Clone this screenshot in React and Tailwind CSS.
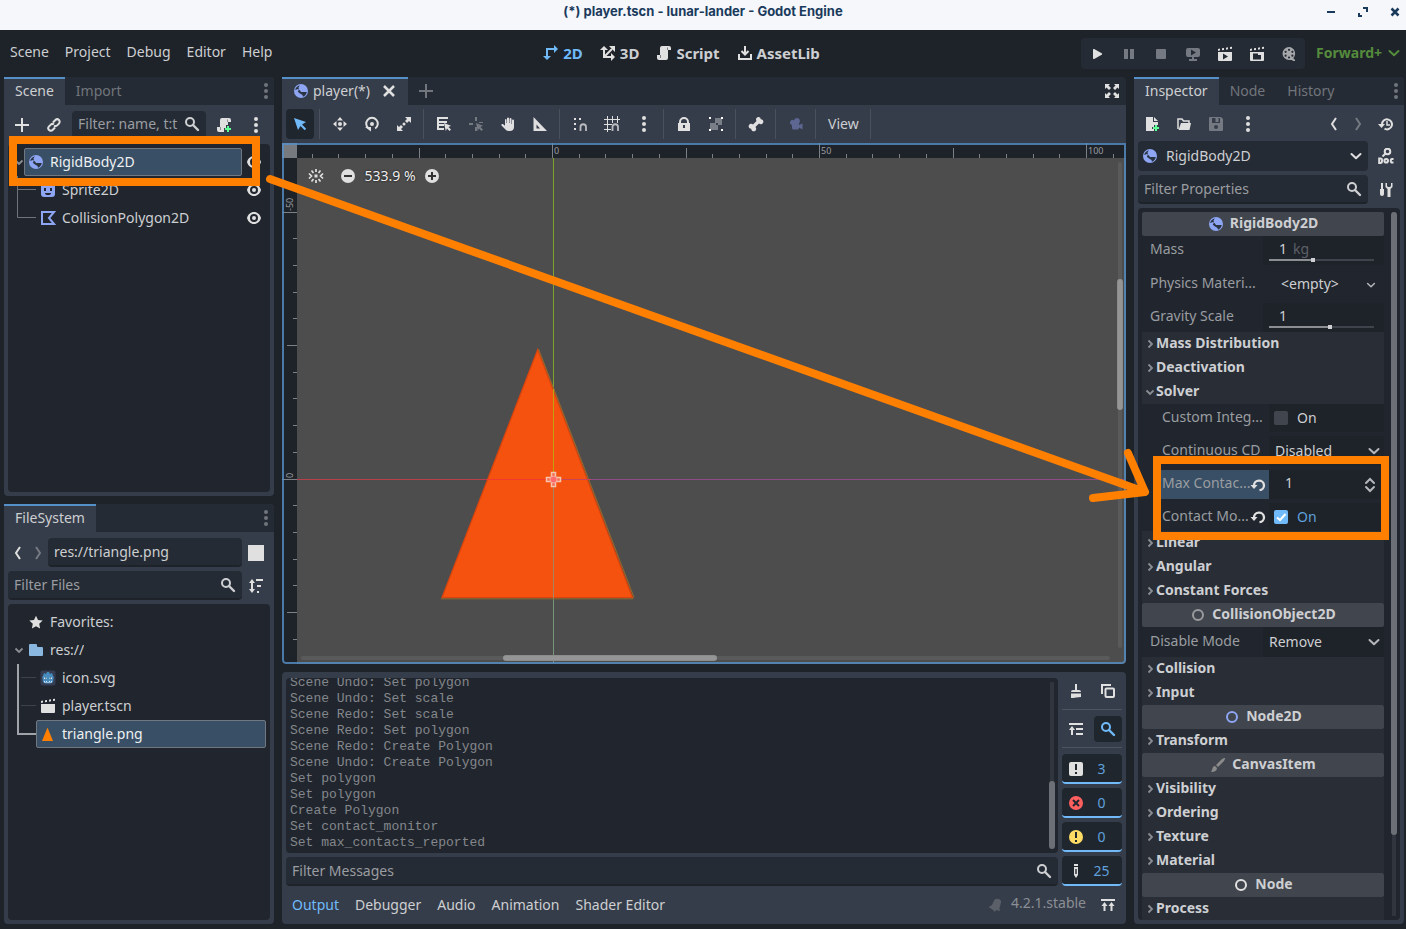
import React from "react";

function Icon({ children, className = "text-[#e0e0e0]" }) {
  return (
    <svg viewBox="0 0 16 16" width="16" height="16" fill="currentColor" aria-hidden="true" className={`shrink-0 ${className}`}>
      {children}
    </svg>
  );
}

const stroke = { fill: "none", stroke: "currentColor", strokeWidth: 2 };

const Plus = (p) => <Icon {...p}><path d="M7 1v6H1v2h6v6h2V9h6V7H9V1z" /></Icon>;
const Link = (p) => (
  <Icon {...p}>
    <g transform="rotate(-45 8 8)" {...stroke}>
      <path d="M7 10.5H3.5a2.5 2.5 0 0 1 0-5H6a2.5 2.5 0 0 1 2.4 2" />
      <path d="M9 5.500h3.500a2.500 2.500 0 0 1 0 5H10a2.500 2.500 0 0 1-2.400-2" />
    </g>
  </Icon>
);
const Search = (p) => (
  <Icon {...p}>
    <circle cx="6" cy="6" r="4" {...stroke} />
    <path d="M9 9l5 5" {...stroke} strokeWidth="2.400" strokeLinecap="round" />
  </Icon>
);
const Dots = (p) => (
  <Icon {...p}><circle cx="8" cy="2" r="2" /><circle cx="8" cy="8" r="2" /><circle cx="8" cy="14" r="2" /></Icon>
);
const scriptPath = "M6 1a2 2 0 0 0-2 2v7H1v3a2 2 0 0 0 2 2h7a2 2 0 0 0 2-2V5h3V3a2 2 0 0 0-2-2z";
const Script = (p) => (
  <Icon {...p}>
    <path d={scriptPath} />
    <path d="M11 2v3h1V3zM4 10v3h1v-3z" fill="#1d2229" opacity=".5" />
  </Icon>
);
const ScriptCreate = (p) => (
  <Icon {...p}>
    <path d="M6 1a2 2 0 0 0-2 2v7H1v3a2 2 0 0 0 2 2h5v-4h2V8h2V5h3V3a2 2 0 0 0-2-2z" />
    <path d="M11 2v3h1V3zM4 10v3h1v-3z" fill="#363d4a" opacity=".5" />
    <path d="M11 9v2H9v2h2v2h2v-2h2v-2h-2V9z" fill="#5fff97" />
  </Icon>
);
const Rigid = (p) => (
  <Icon {...p}>
    <circle cx="8" cy="8" r="7" fill="#8da5f3" />
    <path d="M6.800 2.200C4.500 2.800 2.600 4.600 2.200 7L5 6l2 1.500L8 9h5.800c-.4 2.300-1.800 4-3.800 4.700L9.500 12 7 10.500 4.800 8.800 6 6.500l-.5-2z" fill="#2b3442" />
  </Icon>
);
const Sprite = (p) => (
  <Icon {...p}>
    <rect x="1" y="1" width="14" height="14" rx="3" fill="#8da5f3" />
    <path d="M4 6h2v3H4zM10 6h2v3h-2zM5 11h6a3 2 0 0 1-6 0z" fill="#21262e" />
  </Icon>
);
const Polygon = (p) => <Icon {...p}><path d="M2 2h12L9 8l5 6H2z" {...stroke} stroke="#8da5f3" /></Icon>;
const Eye = (p) => (
  <Icon {...p}>
    <path d="M8 2C4.500 2 2 4.500 1 8c1 3.500 3.500 6 7 6s6-2.500 7-6c-1-3.500-3.500-6-7-6zm0 2a4 4 0 1 1 0 8 4 4 0 0 1 0-8z" />
    <circle cx="8" cy="8" r="2" />
  </Icon>
);
const Back = (p) => <Icon {...p}><path d="M10 2 6 8l4 6" {...stroke} /></Icon>;
const Forward = (p) => <Icon {...p}><path d="M6 2l4 6-4 6" {...stroke} /></Icon>;
const Sort = (p) => (
  <Icon {...p}>
    <path d="M4 1 1 5h2v6H1l3 4 3-4H5V5h2zM8 1h7v2H8zM9 7h4v2H9zM9 13h2v2H9z" />
  </Icon>
);
const Star = (p) => <Icon {...p}><path d="m8 1.700 2 4.300 4.700.6-3.500 3.200.9 4.700L8 12.200l-4.100 2.300.9-4.700L1.300 6.600 6 6z" /></Icon>;
const Folder = (p) => <Icon {...p}><path d="M2 2a1 1 0 0 0-1 1v10a1 1 0 0 0 1 1h12a1 1 0 0 0 1-1V6a1 1 0 0 0-1-1h-4a1 1 0 0 1-1-1V3a1 1 0 0 0-1-1z" fill="#89b7e0" /></Icon>;
const Godot = (p) => (
  <Icon {...p}>
    <rect x=".5" y=".5" width="15" height="15" rx="2" fill="#363d52" />
    <path d="M3 6l1-3 2 1 1-2h2l1 2 2-1 1 3 .8 1L13 12c-2 2-8 2-10 0L2.200 7z" fill="#478cbf" />
    <path d="M4 7.500h2.500v1.500H4zM9.500 7.500H12v1.500H9.500zM4 11h1v1h1v-1h1v1h2v-1h1v1h1v-1h1v1.500H4z" fill="#d8e6f2" />
    <path d="M5 7.500h1v1H5zM10 7.500h1v1h-1z" fill="#414042" />
  </Icon>
);
const clapTop = "M1 3l2-.4v2L1 5zM5 2.300l2-.4v2l-2 .4zM9 1.700l2-.4v2l-2 .4zM13 1l2-.3v2l-2 .4z";
const Clap = (p) => <Icon {...p}><path d={clapTop} /><path d="M1 6h14v8a1 1 0 0 1-1 1H2a1 1 0 0 1-1-1z" /></Icon>;
const PlayScene = (p) => (
  <Icon {...p}><path d={clapTop} /><path fillRule="evenodd" d="M1 6h14v8a1 1 0 0 1-1 1H2a1 1 0 0 1-1-1zM6 7.500v6l5-3z" /></Icon>
);
const PlayCustom = (p) => (
  <Icon {...p}><path d={clapTop} /><path fillRule="evenodd" d="M1 6h14v8a1 1 0 0 1-1 1H2a1 1 0 0 1-1-1zM4 7.500v6h8V9H9V7.500z" /></Icon>
);
const TriangleFile = (p) => <Icon {...p}><path d="M7.500 1.500 13 15H2z" fill="#ff8000" /></Icon>;
const Chevron = (p) => <Icon {...p}><path d="M3.500 6 8 10.300 12.500 6" {...stroke} strokeLinecap="round" strokeLinejoin="round" /></Icon>;
const Close = (p) => <Icon {...p}><path d="M3 3l10 10M13 3 3 13" {...stroke} strokeWidth="2.500" /></Icon>;
const Expand = (p) => (
  <Icon {...p}>
    <path d="M1 1h5L4.500 2.500 7 5 5 7 2.500 4.500 1 6zM15 1v5l-1.500-1.500L11 7 9 5l2.500-2.500L10 1zM1 15v-5l1.500 1.500L5 9l2 2-2.500 2.500L6 15zM15 15h-5l1.500-1.500L9 11l2-2 2.500 2.500L15 10z" />
  </Icon>
);
const Workspace2D = (p) => (
  <Icon {...p}><path d="M4 13V4h8" {...stroke} /><path d="M11 0l4 4-4 4zM0 11h8l-4 4z" /></Icon>
);
const Workspace3D = (p) => (
  <Icon {...p}><path d="M4 4v8h8M4 12l8-8" {...stroke} /><path d="M0 5l4-4 4 4zM11 8l4 4-4 4zM9 1h6v6z" /></Icon>
);
const AssetLib = (p) => (
  <Icon {...p}><path d="M2 9v5h12V9" {...stroke} /><path d="M8 1v8M4.500 6 8 9.500 11.500 6" {...stroke} /></Icon>
);
const Play = (p) => <Icon {...p}><path d="M4 3.800v8.400a.8.800 0 0 0 1.200.7l7.500-4.200a.8.800 0 0 0 0-1.400L5.200 3.100A.8.800 0 0 0 4 3.800z" /></Icon>;
const Pause = (p) => <Icon {...p}><path d="M3 3h4v10H3zM9 3h4v10H9z" /></Icon>;
const Stop = (p) => <Icon {...p}><rect x="3" y="3" width="10" height="10" rx="1" /></Icon>;
const Remote = (p) => (
  <Icon {...p}><path fillRule="evenodd" d="M3 2a2 2 0 0 0-2 2v5a2 2 0 0 0 2 2h10a2 2 0 0 0 2-2V4a2 2 0 0 0-2-2zM6 3.500v6l5-3zM7 11h2v2h3v2H4v-2h3z" /></Icon>
);
const Movie = (p) => (
  <Icon {...p}>
    <path fillRule="evenodd" d="M8 1a6.500 6.500 0 1 0 0 13h3l1 1h2v-1.500c-1 0-1.500-1-1.500-1.800A6.500 6.500 0 0 0 8 1zM8 2.700a1.100 1.100 0 1 1 0 2.200 1.100 1.100 0 0 1 0-2.200zM4.600 4.700a1.100 1.100 0 1 1 0 2.200 1.100 1.100 0 0 1 0-2.200zM11.400 4.700a1.100 1.100 0 1 1 0 2.200 1.100 1.100 0 0 1 0-2.200zM4.600 8.600a1.100 1.100 0 1 1 0 2.200 1.100 1.100 0 0 1 0-2.200zM11.400 8.600a1.100 1.100 0 1 1 0 2.200 1.100 1.100 0 0 1 0-2.200zM8 10.400a1.100 1.100 0 1 1 0 2.200 1.100 1.100 0 0 1 0-2.200z" />
  </Icon>
);
const Select = (p) => <Icon {...p}><path d="M2 2l4 12 2.500-4 4.200 4.200 1.500-1.500L10 8.500 14 6z" /></Icon>;
const Move = (p) => (
  <Icon {...p}><circle cx="8" cy="8" r="2" /><path d="M8 1l3 3.500H5zM8 15l3-3.500H5zM1 8l3.500-3v6zM15 8l-3.500-3v6z" /></Icon>
);
const Rotate = (p) => (
  <Icon {...p}><path d="M4.800 12.500A5.800 5.800 0 1 1 11.200 12.500" {...stroke} /><path d="M1 11h6v4.500z" /><circle cx="8" cy="8" r="2" /></Icon>
);
const Scale = (p) => (
  <Icon {...p}><path d="M9 1h6v6l-2-2-2 2-2-2 2-2zM7 15H1V9l2 2 2-2 2 2-2 2z" /><circle cx="8" cy="8" r="1.500" /></Icon>
);
const ListSelect = (p) => (
  <Icon {...p}><path d="M1 1h11v2H3v2h8v2H3v1h5v2H3v2h5v2H1z" /><path d="M8 7l7 2.800-2.500 1.200L15 13.500 13.500 15 11 12.500 9.800 15z" /></Icon>
);
const Pivot = (p) => (
  <Icon {...p}><path d="M7 1h2v4H7zM7 11h2v4H7zM1 7h4v2H1zM11 6h4v1h-4z" /><path d="M8 7l7 2.800-2.500 1.200L15 13.500 13.500 15 11 12.500 9.800 15z" /></Icon>
);
const Pan = (p) => (
  <Icon {...p}><path d="M7 2.500a1 1 0 0 1 2 0V7h.5V3a1 1 0 0 1 2 0v5h.5V4.500a1 1 0 0 1 2 0V11c0 2.500-1.500 4-4 4H8.500c-1.500 0-2.500-.7-3.500-2L1.500 9.500C1 8.500 2.300 7.600 3.200 8.300L5 9.800V3.500a1 1 0 0 1 1.500 0V7H7z" /></Icon>
);
const Ruler = (p) => <Icon {...p}><path fillRule="evenodd" d="M1.500 1v14H15zM4.500 8.500l3.500 4H4.500z" /></Icon>;
const Magnet = <path d="M8.500 15v-4a2.500 2.500 0 0 1 5.500 0v4" {...stroke} strokeWidth="1.800" stroke="#b9bbbe" />;
const SmartSnap = (p) => <Icon {...p}><path d="M1 2h2v2H1zM6 2h2v2H6zM1 7h2v2H1zM1 12h2v2H1z" transform="translate(1)" />{Magnet}</Icon>;
const GridSnap = (p) => <Icon {...p}><path d="M3 0h1v3h4V0h1v3h4V0h1v3h2v1h-2v3h-1V4H9v3H8V4H4v4h4v1H4v4h3v1H4v2H3v-2H0v-1h3V9H0V8h3V4H0V3h3z" />{Magnet}</Icon>;
const Lock = (p) => <Icon {...p}><path fillRule="evenodd" d="M8 1a5 5 0 0 0-5 5v1H2v8h12V7h-1V6a5 5 0 0 0-5-5zm0 2a3 3 0 0 1 3 3v1H5V6a3 3 0 0 1 3-3zM7 9h2v3H7z" /></Icon>;
const Group = (p) => (
  <Icon {...p}>
    <path d="M7 2h7v7h-4v5H2V7h5z" opacity=".4" />
    <path d="M8 7h2v2H8z" fill="#363d4a" />
    <path d="M1 1h2v2H1zM13 1h2v2h-2zM1 13h2v2H1zM13 13h2v2h-2z" fill="#fff" />
  </Icon>
);
const Bone = (p) => <Icon {...p}><path d="M10.500 1a2.500 2.500 0 0 0-2.400 3.200L8.600 5 5 8.600a2.500 2.500 0 1 0-1.800 4.200A2.500 2.500 0 1 0 7.400 11L11 7.400a2.500 2.500 0 1 0 1.800-4.200A2.500 2.500 0 0 0 10.500 1z" /></Icon>;
const Camera = (p) => <Icon {...p}><path d="M9 2a3 3 0 0 0-3 2.500A2.500 2.500 0 1 0 4 9v3a1.500 1.500 0 0 0 1.500 1.500h4A1.500 1.500 0 0 0 11 12v-.5l3.500 2v-6L11 9V7.200A3 3 0 0 0 9 2z" /></Icon>;
const Center = (p) => (
  <Icon {...p}>
    <path d="M6.500 6.500h3v3h-3z" />
    <path d="M8 1v3M8 12v3M3.500 2.500l2 2.500M12.500 2.500l-2 2.500M3.500 13.500l2-2.500M12.500 13.500l-2-2.500M1 5.500 3.500 8 1 10.500M15 5.500 12.500 8l2.500 2.500" {...stroke} strokeWidth="1.700" />
  </Icon>
);
const ZoomOut = (p) => <Icon {...p}><circle cx="8" cy="8" r="7" /><path d="M4 7h8v2H4z" fill="#333" /></Icon>;
const ZoomIn = (p) => <Icon {...p}><circle cx="8" cy="8" r="7" /><path d="M4 7h3V4h2v3h3v2H9v3H7V9H4z" fill="#333" /></Icon>;
const Clear = (p) => <Icon {...p}><path d="M7 1h2v6h2a2 2 0 0 1 2 2H3a2 2 0 0 1 2-2h2zM3 10.500h10V14c-3 .3-7 1-10 1z" /></Icon>;
const Copy = (p) => <Icon {...p}><path d="M2 11V2h9" {...stroke} /><rect x="5.500" y="5.500" width="8.500" height="8.500" rx="1" {...stroke} /></Icon>;
const Collapse = (p) => <Icon {...p}><path d="M1 2h14v2H1zM8 7h7v2H8zM8 12h7v2H8zM4 5l3 4H5v5H3V9H1z" /></Icon>;
const Note = (p) => <Icon {...p}><rect x="1" y="1" width="14" height="14" rx="2" /><path d="M7 3h2v6H7zM7 11h2v2H7z" fill="#20262e" /></Icon>;
const ErrorIcon = (p) => <Icon {...p}><circle cx="8" cy="8" r="7" fill="#ff5f5f" /><path d="M5 5l6 6M11 5l-6 6" {...stroke} stroke="#20262e" /></Icon>;
const Warn = (p) => <Icon {...p}><circle cx="8" cy="8" r="7" fill="#ffdd65" /><path d="M7 3h2v6H7zM7 11h2v2H7z" fill="#20262e" /></Icon>;
const Pencil = (p) => <Icon {...p}><path fillRule="evenodd" d="M6 1h4v2H6zM6 4h4v8l-2 3-2-3zM7.300 6v5h1.400V6z" /></Icon>;
const Bell = (p) => <Icon {...p}><path d="M11 2c2 0 3.500 1.500 3 3.500L12.500 11l.5 3-4-1-1 2-2-2-4.500-3L5 8l1.500-3.500C7.500 2.500 9 1.500 11 2z" /></Icon>;
const ExpandUp = (p) => <Icon {...p}><path d="M1 2h14v2H1zM4.500 5l3 4h-2v5h-2V9h-2zM11.500 5l3 4h-2v5h-2V9h-2z" /></Icon>;
const FileNew = (p) => <Icon {...p}><path d="M2 1h7v5h5v3h-4v2H8v2h2v2H2zM10 1l4 4h-4z" /><path d="M11 9v2H9v2h2v2h2v-2h2v-2h-2V9z" fill="#5fff97" /></Icon>;
const Load = (p) => <Icon {...p}><path d="M2 13V3h4l1.500 2H13v2" {...stroke} strokeWidth="1.500" /><path d="M5 7h10l-1.500 7H2.500z" /></Icon>;
const Save = (p) => <Icon {...p}><path fillRule="evenodd" d="M2 1h11l2 2v11a1 1 0 0 1-1 1H2a1 1 0 0 1-1-1V2a1 1 0 0 1 1-1zM4 2v5h8V2h-1.500v4h-3V2zM8 9a2 2 0 1 0 0 4 2 2 0 0 0 0-4z" /></Icon>;
const History = (p) => <Icon {...p}><path d="M4 8.500a5 5 0 1 1 2.500 4.200" {...stroke} /><path d="M0 8h7l-3.500 4z" /><path d="M9 5v4h3" {...stroke} strokeWidth="1.500" /></Icon>;
const Doc = (p) => (
  <Icon {...p}>
    <circle cx="9.500" cy="3.500" r="2.800" {...stroke} /><path d="M7.500 5.500 4.500 8.500" {...stroke} />
    <path d="M1.200 10.500h1.300a1.500 2.200 0 0 1 0 4.500H1.200zM15.500 11h-1.500a1 1.500 0 0 0 0 3.600h1.500" {...stroke} />
    <circle cx="8.200" cy="12.800" r="1.800" {...stroke} />
  </Icon>
);
const Tools = (p) => <Icon {...p}><path d="M3 1h2v6h1v5a2 2 0 0 1-4 0V7h1zM9 1v3l1 1h2l1-1V1h1.500v4l-2 2v8h-3V7l-2-2V1z" /></Icon>;
const Reload = (p) => <Icon {...p}><path d="M4 8.500a5 4.800 0 1 1 5.500 4.700" {...stroke} strokeWidth="2.300" /><path d="M.5 8h7L4 12z" /></Icon>;
const UpDown = (p) => <Icon {...p}><path d="M4 6l4-4 4 4M4 10l4 4 4-4" {...stroke} strokeLinecap="round" /></Icon>;
const Ring = (p) => <Icon {...p}><circle cx="8" cy="8" r="5" {...stroke} /></Icon>;
const Brush = (p) => <Icon {...p}><path d="M15 1c-1.500 0-2.500.5-4 2L6 8l2 2 5-5c1.500-1.500 2-2.500 2-4zM5 9l2 2c0 2.500-2 4-6 4 1.500-1.500 1-6 4-6z" /></Icon>;
const Arrow = ({ open }) => (
  <svg viewBox="0 0 10 10" width="10" height="10" aria-hidden="true" className="shrink-0 text-[#8b8e93]">
    <path d={open ? "M1.500 3.500 5 7l3.500-3.500" : "M3.500 1.500 7 5 3.500 8.500"} fill="none" stroke="currentColor" strokeWidth="1.800" />
  </svg>
);

function ToolButton({ icon: I, label, active, muted, size = "size-7" }) {
  return (
    <button aria-label={label} className={`flex shrink-0 items-center justify-center rounded-sm ${size} ${active ? "bg-[#20262e]" : ""}`}>
      <I className={active ? "text-[#70bafa]" : muted ? "text-[#757a82]" : "text-[#e0e0e0]"} />
    </button>
  );
}

const Sep = () => <span className="mr-0.5 ml-px h-[30px] w-px shrink-0 bg-[#4a515d]" />;

function DockTabs({ tabs }) {
  return (
    <div role="tablist" className="flex h-7 shrink-0 items-stretch rounded-t-sm bg-[#252b34]">
      {tabs.map((t, i) => (
        <button
          key={t}
          role="tab"
          aria-selected={i === 0}
          className={`border-t-2 px-[11px] pb-0.5 leading-5 ${i === 0 ? "border-[#5690c8] bg-[#363d4a] text-[#cdcfd2]" : "border-transparent text-[#71757c]"}`}
        >
          {t}
        </button>
      ))}
      <button aria-label="Dock options" className="ml-auto"><Dots className="text-[#71757c]" /></button>
    </div>
  );
}

function Field({ label, className = "", ...rest }) {
  return (
    <label className={`flex h-[29px] min-w-0 items-center rounded-sm border-b-2 border-[#1e232a] bg-[#252b34] px-1.5 ${className}`}>
      <input aria-label={label} className="w-full min-w-0 bg-transparent text-[#cdcfd2] outline-none placeholder:text-[#9a9da1]" {...rest} />
      {rest.placeholder && <Search className="text-[#cdcfd2]" />}
    </label>
  );
}

function TreeRow({ icon: I, text, indent, arrow, selected, visible }) {
  return (
    <li className="flex h-7 items-center">
      <span className={`flex h-7 shrink-0 items-center justify-end ${indent ? "w-[26px]" : "w-3.5"}`}>
        {arrow && <Arrow open />}
      </span>
      <button
        className={`flex h-7 min-w-0 flex-1 items-center gap-1.5 rounded-xs border pl-[3px] text-left ${
          selected ? "border-[#70777f] bg-[#384f65] text-[#eef0f2]" : "border-transparent text-[#cdcfd2]"
        } ${visible ? "" : "mr-0.5"}`}
      >
        <I />
        <span className="truncate">{text}</span>
      </button>
      {visible && <button aria-label={`Toggle visibility of ${text}`} className="ml-1 flex w-[22px] shrink-0"><Eye /></button>}
    </li>
  );
}

function SceneDock() {
  return (
    <section className="flex min-h-0 flex-1 flex-col rounded-sm bg-[#363d4a]">
      <DockTabs tabs={["Scene", "Import"]} />
      <div className="flex h-10 shrink-0 items-center gap-1 px-1">
        <ToolButton icon={Plus} label="Add node" />
        <ToolButton icon={Link} label="Instantiate scene" />
        <Field label="Filter nodes" placeholder="Filter: name, t:t" className="w-[134px]" />
        <ToolButton icon={ScriptCreate} label="Attach script" />
        <ToolButton icon={Dots} label="More options" />
      </div>
      <div className="mx-1 mb-1 -mt-px min-h-0 flex-1 rounded-sm bg-[#21262e] px-0.5 pt-1">
        <ul className="relative">
          <TreeRow icon={Rigid} text="RigidBody2D" arrow selected visible />
          <TreeRow icon={Sprite} text="Sprite2D" indent visible />
          <TreeRow icon={Polygon} text="CollisionPolygon2D" indent visible />
          <svg className="pointer-events-none absolute top-0 left-0" width="28" height="84" aria-hidden="true">
            <path d="M7.500 28v41.500H26M7.500 41.500H26" fill="none" stroke="#6f747b" />
          </svg>
        </ul>
      </div>
    </section>
  );
}

function FileDock() {
  return (
    <section className="flex h-[420px] shrink-0 flex-col rounded-sm bg-[#363d4a]">
      <DockTabs tabs={["FileSystem"]} />
      <div className="flex items-center px-1 pt-1.5">
        <ToolButton icon={Back} label="Previous folder" size="h-7 w-5" />
        <ToolButton icon={Forward} label="Next folder" muted size="h-7 w-5" />
        <Field label="Path" defaultValue="res://triangle.png" className="flex-1" />
        <button aria-label="Toggle split mode" className="mx-1.5 size-4 shrink-0 bg-[#e0e0e0]" />
      </div>
      <div className="flex items-center px-1 pt-1">
        <Field label="Filter files" placeholder="Filter Files" className="flex-1" />
        <ToolButton icon={Sort} label="Sort files" />
      </div>
      <div className="m-1 min-h-0 flex-1 rounded-sm bg-[#21262e] px-0.5 pt-1">
        <ul className="relative">
          <TreeRow icon={Star} text="Favorites:" />
          <TreeRow icon={Folder} text="res://" arrow />
          <TreeRow icon={Godot} text="icon.svg" indent />
          <TreeRow icon={Clap} text="player.tscn" indent />
          <TreeRow icon={TriangleFile} text="triangle.png" indent selected />
          <svg className="pointer-events-none absolute top-0 left-0" width="26" height="140" aria-hidden="true">
            <path d="M8 56v70h18" fill="none" stroke="#a0a3a8" strokeWidth="2" />
            <path d="M11 69.500h15M11 97.500h15" stroke="#3d434d" />
          </svg>
        </ul>
      </div>
    </section>
  );
}

const STEP = 26.7;
const ORIGIN = { x: 271, y: 336 };

function CanvasDrawing() {
  const xs = Array.from({ length: 31 }, (_, i) => i - 9);
  const ys = Array.from({ length: 18 }, (_, i) => i - 11);
  return (
    <svg className="absolute inset-0 h-full w-full" aria-hidden="true">
      <rect width="100%" height="100%" fill="#4d4d4d" />
      <path d={`M15 ${ORIGIN.y + 0.5}H${ORIGIN.x}`} stroke="#b5404b" />
      <path d={`M${ORIGIN.x} ${ORIGIN.y + 0.5}H842`} stroke="#8f4c86" />
      <path d="M271.500 15V336" stroke="#7ea32b" />
      <path d="M271.500 336V520" stroke="#769579" />
      <path d="M255.700 206.500 160 454.500H350.500z" fill="#f4520e" stroke="#d8440f" strokeWidth="1.200" />
      <path d="M256.500 206 352 454.500" stroke="#9a6a2a" strokeWidth="1" />
      <path d="M159 455.800H351.500" stroke="#98682a" />
      <path d="M271.500 246V336" stroke="#c2a010" />
      <path d="M271.500 336V455" stroke="#a68560" />
      <path d="M205 336.500H271" stroke="#f03a30" />
      <path d="M271 336.500H309" stroke="#c8445a" />
      <path d="M269.500 329.500h4v5h5v4h-5v5h-4v-5h-5v-4h5z" fill="#f46a50" stroke="#f5c4ac" strokeWidth="1.500" />
      <circle cx="271.500" cy="336.500" r="3.500" fill="#ff6b6b" stroke="#f5b0a0" />
      <rect width="100%" height="15" fill="#1e2229" />
      <rect width="15" height="100%" fill="#1e2229" />
      {xs.map((k) => {
        const x = Math.round(ORIGIN.x + k * STEP);
        if (x < 16) return null;
        const major = k % 10 === 0;
        return (
          <g key={k}>
            <path d={`M${x - 0.5} ${major ? 0 : k % 5 === 0 ? 5 : 11}V15`} stroke="#7d8085" />
            {major && <text x={x + 1} y="11" fontSize="9" fill="#9a9ca0">{k * 5}</text>}
          </g>
        );
      })}
      {ys.map((k) => {
        const y = Math.floor(ORIGIN.y + k * STEP);
        const major = k % 10 === 0;
        return (
          <g key={k}>
            <path d={`M${major ? 0 : k % 5 === 0 ? 5 : 11} ${y + 0.5}H15`} stroke="#7d8085" />
            {major && <text transform={`translate(11 ${y - 1}) rotate(-90)`} fontSize="9" fill="#9a9ca0">{k * 5}</text>}
          </g>
        );
      })}
      <rect width="15" height="15" fill="#777a7f" />
    </svg>
  );
}

function Viewport() {
  return (
    <div className="relative min-h-0 flex-1 overflow-hidden rounded-b-sm">
      <CanvasDrawing />
      <div className="absolute top-[136px] right-[3px] h-[131px] w-1.5 rounded-full bg-[#8c8c8c]" />
      <div className="absolute top-[19px] right-1 bottom-4 w-1 rounded-full bg-white/8" />
      <div className="absolute bottom-[3px] left-[221px] h-1.5 w-[214px] rounded-full bg-[#8c8c8c]" />
      <div className="absolute right-4 bottom-1 left-[19px] h-1 rounded-full bg-white/8" />
      <div className="pointer-events-none absolute inset-0 rounded-b-sm border-2 border-[#5690c8]/80" />
      <div className="absolute top-[19px] left-5 flex items-center text-[#f0f0f0]">
        <ToolButton icon={Center} label="Center view" />
        <span className="w-1" />
        <ToolButton icon={ZoomOut} label="Zoom out" />
        <button className="w-14 text-center leading-7 [text-shadow:0_0_2px_#000]">533.9 %</button>
        <ToolButton icon={ZoomIn} label="Zoom in" />
      </div>
    </div>
  );
}

function SceneToolbar() {
  return (
    <div className="flex h-[38px] shrink-0 items-center gap-1 bg-[#363d4a] px-1">
      <button aria-label="Select mode" className="flex h-[30px] w-7 shrink-0 items-center justify-center rounded-sm bg-[#20262e]"><Select className="text-[#70bafa]" /></button>
      <Sep />
      <ToolButton icon={Move} label="Move mode" />
      <ToolButton icon={Rotate} label="Rotate mode" />
      <ToolButton icon={Scale} label="Scale mode" />
      <Sep />
      <ToolButton icon={ListSelect} label="List selectable nodes" />
      <ToolButton icon={Pivot} label="Change pivot" muted />
      <ToolButton icon={Pan} label="Pan mode" />
      <ToolButton icon={Ruler} label="Ruler mode" />
      <Sep />
      <ToolButton icon={SmartSnap} label="Smart snap" />
      <ToolButton icon={GridSnap} label="Grid snap" />
      <ToolButton icon={Dots} label="Snapping options" />
      <Sep />
      <ToolButton icon={Lock} label="Lock node" />
      <ToolButton icon={Group} label="Group nodes" />
      <Sep />
      <ToolButton icon={Bone} label="Skeleton options" />
      <Sep />
      <button aria-label="Override camera" className="flex size-7 items-center justify-center"><Camera className="text-[#5d6791]" /></button>
      <Sep />
      <button className="px-1.5 text-[#cdcfd2]">View</button>
      <Sep />
    </div>
  );
}

const LOG = [
  "Scene Undo: Set polygon", "Scene Undo: Set scale", "Scene Redo: Set scale", "Scene Redo: Set polygon",
  "Scene Redo: Create Polygon", "Scene Undo: Create Polygon", "Set polygon", "Set polygon", "Create Polygon",
  "Set contact_monitor", "Set max_contacts_reported",
];

function CountButton({ icon: I, label, count }) {
  return (
    <button aria-label={`${label}: ${count}`} className="flex h-[30px] items-center rounded-sm border-b-2 border-[#70bafa] bg-[#20262e] pt-0.5 pl-1.5">
      <I />
      <span className="flex-1 pr-[3px] text-center text-[#5fa0dd]">{count}</span>
    </button>
  );
}

function OutputPanel() {
  return (
    <section className="mt-2 flex h-[252px] shrink-0 flex-col rounded-sm bg-[#363d4a] px-1 pt-1.5">
      <div className="flex h-[208px] gap-1">
        <div className="flex min-w-0 flex-1 flex-col gap-1">
          <div className="flex min-h-0 flex-1 rounded-sm bg-[#21262e]">
            <div className="flex min-h-0 flex-1 flex-col justify-end overflow-hidden pb-0.5 pl-1 font-['Liberation_Mono',monospace] text-[13px] leading-4 text-[#84878c]">
              {LOG.map((line, i) => <p key={i} className="shrink-0">{line}</p>)}
            </div>
            <div className="my-1 mr-[3px] flex w-1.5 flex-col justify-end rounded-full bg-[linear-gradient(to_right,transparent_1px,#31363e_1px,#31363e_5px,transparent_5px)]">
              <div className="h-[68px] rounded-full bg-[#6c6f75]" />
            </div>
          </div>
          <Field label="Filter messages" placeholder="Filter Messages" />
        </div>
        <div className="flex w-[60px] shrink-0 flex-col">
          <div className="flex h-[26px] justify-between">
            <ToolButton icon={Clear} label="Clear output" size="h-[26px] w-7" />
            <ToolButton icon={Copy} label="Copy selection" size="h-[26px] w-7" />
          </div>
          <hr className="mt-[5px] mb-1.5 border-[#4d545f]" />
          <div className="flex h-[26px] justify-between">
            <ToolButton icon={Collapse} label="Collapse duplicates" size="h-[26px] w-7" />
            <ToolButton icon={Search} label="Toggle filter" active size="h-[26px] w-7" />
          </div>
          <hr className="mt-[5px] mb-1.5 border-[#4d545f]" />
          <div className="flex flex-1 flex-col gap-1">
            <CountButton icon={Note} label="Messages" count={3} />
            <CountButton icon={ErrorIcon} label="Errors" count={0} />
            <CountButton icon={Warn} label="Warnings" count={0} />
            <CountButton icon={Pencil} label="Editor messages" count={25} />
          </div>
        </div>
      </div>
      <div className="flex h-[38px] items-center gap-4 px-1.5 text-[#cdcfd2]">
        <button className="text-[#70bafa]">Output</button>
        <button>Debugger</button>
        <button>Audio</button>
        <button>Animation</button>
        <button>Shader Editor</button>
        <div className="ml-auto flex items-center gap-2">
          <Bell className="text-[#5a5f68]" />
          <span className="mb-1 text-[#8b8f95]">4.2.1.stable</span>
          <button aria-label="Expand panel" className="ml-1.5"><ExpandUp /></button>
        </div>
      </div>
    </section>
  );
}

function CenterColumn() {
  return (
    <main className="flex min-w-0 flex-1 flex-col">
      <div className="flex h-7 shrink-0 items-stretch rounded-t-sm bg-[#252b34]">
        <div className="flex items-center border-t-2 border-[#5690c8] bg-[#363d4a] px-[11px] pb-0.5">
          <button className="flex items-center gap-1 text-[#cdcfd2]"><Rigid />player(*)</button>
          <button aria-label="Close scene" className="ml-[11px]"><Close /></button>
        </div>
        <button aria-label="New scene" className="px-2.5"><Plus className="text-[#71757c]" /></button>
        <button aria-label="Distraction free mode" className="mr-1.5 ml-auto"><Expand /></button>
      </div>
      <SceneToolbar />
      <Viewport />
      <OutputPanel />
    </main>
  );
}

function ClassHeader({ icon: I, color, children }) {
  return (
    <h2 className="flex h-6 shrink-0 items-center justify-center gap-1.5 rounded-xs bg-[#41454d] font-bold text-[#cdcfd2]">
      <I className={color} />
      <span className="mb-0.5">{children}</span>
    </h2>
  );
}

function Section({ open, children }) {
  return (
    <button aria-expanded={!!open} className="flex h-6 w-full shrink-0 items-center gap-px bg-[#282d36] pl-[3px] font-bold text-[#cdcfd2]">
      <Arrow open={open} />
      <span className="mb-0.5">{children}</span>
    </button>
  );
}

function Prop({ id, label, sub, height = "h-[29px]", reset, highlight, children }) {
  return (
    <div className={`flex shrink-0 ${height}`}>
      <div className={`flex min-w-0 items-center ${sub ? "ml-[19px] w-[108px] pl-px" : "w-[121px] pl-2"} ${highlight ? "bg-[#384f65]" : ""}`}>
        <label htmlFor={id} className="min-w-0 flex-1 overflow-hidden whitespace-nowrap pb-[3px] text-[#9a9da1]">{label}</label>
        {reset && <button aria-label={`Reset ${label}`} className="mr-[3px] flex"><Reload /></button>}
      </div>
      <div className="flex min-w-0 flex-1 rounded-xs bg-[#1e2229] text-[#cdcfd2]">{children}</div>
    </div>
  );
}

const rangeClass =
  "h-0.5 w-[105px] appearance-none [&::-webkit-slider-thumb]:size-1 [&::-webkit-slider-thumb]:appearance-none [&::-webkit-slider-thumb]:bg-[#cdcfd2]";

function SliderValue({ id, suffix, value, track }) {
  return (
    <div className="flex flex-1 flex-col pl-1.5">
      <div className="flex h-[23px] items-center gap-1.5 pt-0.5 pl-2.5">
        <input id={id} defaultValue="1" className={`bg-transparent outline-none ${suffix ? "w-2" : "w-20"}`} />
        {suffix && <span className="text-[#5c6066]">{suffix}</span>}
      </div>
      <input type="range" aria-label={`${id} slider`} defaultValue={value} className={`${rangeClass} ${track}`} />
    </div>
  );
}

function SelectValue({ id, value, pad = "pl-1.5", small }) {
  return (
    <div className="relative flex flex-1">
      <select id={id} className={`w-full appearance-none bg-transparent outline-none ${pad}`}><option>{value}</option></select>
      <Chevron className={`pointer-events-none absolute text-[#b5b7ba] ${small ? "top-2.5 right-[7px] size-3" : "top-[7px] right-0.5"}`} />
    </div>
  );
}

function Check({ id, checked }) {
  return (
    <label className={`flex flex-1 items-center gap-[9px] pl-[5px] ${checked ? "text-[#5fa0dd]" : ""}`}>
      <span className="relative flex">
        <input id={id} type="checkbox" defaultChecked={checked} className="size-3.5 appearance-none rounded-xs bg-[#41454d] checked:bg-[#70bafa]" />
        {checked && (
          <svg viewBox="0 0 14 14" className="pointer-events-none absolute inset-0 size-3.5" aria-hidden="true">
            <path d="M3 7.500 6 10l5.500-6" fill="none" stroke="#fff" strokeWidth="2" />
          </svg>
        )}
      </span>
      On
    </label>
  );
}

function Inspector() {
  return (
    <aside className="flex w-[270px] shrink-0 flex-col rounded-sm bg-[#363d4a]">
      <DockTabs tabs={["Inspector", "Node", "History"]} />
      <div className="flex h-9 shrink-0 items-center gap-1 pt-0.5 pr-0.5 pl-1">
        <ToolButton icon={FileNew} label="New resource" />
        <ToolButton icon={Load} label="Load resource" />
        <ToolButton icon={Save} label="Save resource" muted />
        <ToolButton icon={Dots} label="Resource options" />
        <div className="ml-auto flex">
          <ToolButton icon={Back} label="Previous object" size="h-7 w-6" />
          <ToolButton icon={Forward} label="Next object" muted size="h-7 w-6" />
          <ToolButton icon={History} label="Object history" size="h-7 w-8" />
        </div>
      </div>
      <div className="flex shrink-0 items-center gap-1 px-1">
        <button className="flex h-[30px] flex-1 items-center gap-2 rounded-sm bg-[#252b34] px-1 text-[#cdcfd2]">
          <Rigid />RigidBody2D<span className="ml-auto"><Chevron /></span>
        </button>
        <ToolButton icon={Doc} label="Open documentation" />
      </div>
      <div className="flex shrink-0 items-center gap-1 px-1 pt-1">
        <Field label="Filter properties" placeholder="Filter Properties" className="flex-1" />
        <ToolButton icon={Tools} label="Manage properties" />
      </div>
      <div className="m-1 flex min-h-0 flex-1 rounded-sm bg-[#21262e]">
        <div className="flex min-h-0 flex-1 flex-col overflow-hidden pt-1 pl-1">
          <ClassHeader icon={Rigid}>RigidBody2D</ClassHeader>
          <div className="flex flex-col gap-1">
            <Prop id="mass" label="Mass"><SliderValue id="mass" suffix="kg" value={42} track="bg-[linear-gradient(to_right,#8b8e92_42%,#3f444c_42%)]" /></Prop>
            <Prop id="material" label="Physics Materi..." height="h-[30px]">
              <div className="flex flex-1 bg-[#21262e]"><SelectValue id="material" value="<empty>" pad="pl-[18px]" small /></div>
            </Prop>
            <Prop id="gravity" label="Gravity Scale"><SliderValue id="gravity" value={58} track="bg-[linear-gradient(to_right,#8b8e92_58%,#3f444c_58%)]" /></Prop>
          </div>
          <Section>Mass Distribution</Section>
          <Section>Deactivation</Section>
          <Section open>Solver</Section>
          <div className="flex flex-col gap-1">
            <Prop id="integrator" label="Custom Integ..." sub height="h-7"><Check id="integrator" /></Prop>
            <Prop id="ccd" label="Continuous CD" sub height="h-[30px]"><SelectValue id="ccd" value="Disabled" /></Prop>
            <Prop id="contacts" label="Max Contac..." sub reset highlight>
              <input id="contacts" defaultValue="1" className="min-w-0 flex-1 bg-transparent pb-[3px] pl-4 outline-none" />
              <button aria-label="Adjust value" className="mr-1.5"><UpDown className="text-[#b5b7ba]" /></button>
            </Prop>
            <Prop id="monitor" label="Contact Mo..." sub reset height="h-7"><Check id="monitor" checked /></Prop>
          </div>
          <Section>Linear</Section>
          <Section>Angular</Section>
          <Section>Constant Forces</Section>
          <ClassHeader icon={Ring} color="text-[#999b9e]">CollisionObject2D</ClassHeader>
          <Prop id="disable" label="Disable Mode" height="h-[30px]"><SelectValue id="disable" value="Remove" /></Prop>
          <Section>Collision</Section>
          <Section>Input</Section>
          <ClassHeader icon={Ring} color="text-[#8da5f3]">Node2D</ClassHeader>
          <Section>Transform</Section>
          <ClassHeader icon={Brush} color="text-[#8b8b8b]">CanvasItem</ClassHeader>
          <Section>Visibility</Section>
          <Section>Ordering</Section>
          <Section>Texture</Section>
          <Section>Material</Section>
          <ClassHeader icon={Ring}>Node</ClassHeader>
          <Section>Process</Section>
        </div>
        <div className="my-1 mr-[3px] ml-[7px] w-1.5 shrink-0 bg-[linear-gradient(to_right,transparent_1px,#31363e_1px,#31363e_5px,transparent_5px)]">
          <div className="h-[88.5%] rounded-full bg-[#6c6f75]" />
        </div>
      </div>
    </aside>
  );
}

function TitleBar() {
  return (
    <header className="flex h-[30px] shrink-0 items-center bg-[#f5f7fb] font-['Inter',sans-serif] text-[13px] font-bold text-[#1a3a5c]">
      <span className="w-24" />
      <h1 className="flex-1 pb-2 text-center">(*) player.tscn - lunar-lander - Godot Engine</h1>
      <div className="flex w-24 justify-end gap-4 pr-[3px] pb-1.5">
        <button aria-label="Minimize"><Icon className="text-[#1a3a5c]"><path d="M4 7h8v2H4z" /></Icon></button>
        <button aria-label="Maximize"><Icon className="text-[#1a3a5c]"><path d="M8 4h4v4M7 12H4V9" {...stroke} /></Icon></button>
        <button aria-label="Close"><Icon className="text-[#1a3a5c]"><path d="M4.500 4.500l7 7M11.500 4.500l-7 7" {...stroke} strokeWidth="2.500" /></Icon></button>
      </div>
    </header>
  );
}

function MenuBar() {
  return (
    <nav className="flex h-[47px] shrink-0 items-center pr-1">
      <div className="flex w-[274px] gap-4 pb-1 pl-2.5 text-[#cdcfd2]">
        {["Scene", "Project", "Debug", "Editor", "Help"].map((m) => <button key={m}>{m}</button>)}
      </div>
      <div className="flex flex-1 justify-center gap-[17px] pb-0.5 pl-2 text-[15px] font-bold text-[#cdcfd2]">
        <button className="flex items-center gap-1 text-[#70bafa]"><Workspace2D className="text-[#70bafa]" />2D</button>
        <button className="flex items-center gap-1"><Workspace3D />3D</button>
        <button className="flex items-center gap-1"><Script />Script</button>
        <button className="flex items-center gap-1"><AssetLib />AssetLib</button>
      </div>
      <div className="flex h-[31px] items-center gap-1 rounded-sm bg-[#252b34] px-0.5">
        <ToolButton icon={Play} label="Run project" />
        <ToolButton icon={Pause} label="Pause" muted />
        <ToolButton icon={Stop} label="Stop" muted />
        <ToolButton icon={Remote} label="Remote debug" muted />
        <ToolButton icon={PlayScene} label="Run current scene" />
        <ToolButton icon={PlayCustom} label="Run specific scene" />
        <button aria-label="Movie maker mode" className="flex size-7 items-center justify-center"><Movie className="text-[#a5a7ab]" /></button>
      </div>
      <button className="ml-[11px] flex items-center gap-1 pb-0.5 font-bold text-[#558b3c]">
        Forward+<Chevron className="text-[#558b3c]" />
      </button>
    </nav>
  );
}

function Annotations() {
  return (
    <svg className="pointer-events-none absolute inset-0 h-full w-full" aria-hidden="true">
      <g fill="none" stroke="#ff8000" strokeWidth="8">
        <rect x="13" y="140" width="243" height="42" />
        <rect x="1157" y="460" width="228" height="76" />
        <path d="M270 179 1145 492M1128 453l17 39-52 6" strokeLinecap="round" strokeLinejoin="round" />
      </g>
    </svg>
  );
}

export default function App() {
  return (
    <div className="relative flex h-screen w-full flex-col overflow-hidden bg-[#1e2229] font-['Noto_Sans',sans-serif] text-[14px] leading-5">
      <TitleBar />
      <MenuBar />
      <div className="flex min-h-0 flex-1 gap-2 pr-0.5 pb-[5px] pl-1">
        <div className="flex w-[270px] shrink-0 flex-col gap-2">
          <SceneDock />
          <FileDock />
        </div>
        <CenterColumn />
        <Inspector />
      </div>
      <Annotations />
    </div>
  );
}
